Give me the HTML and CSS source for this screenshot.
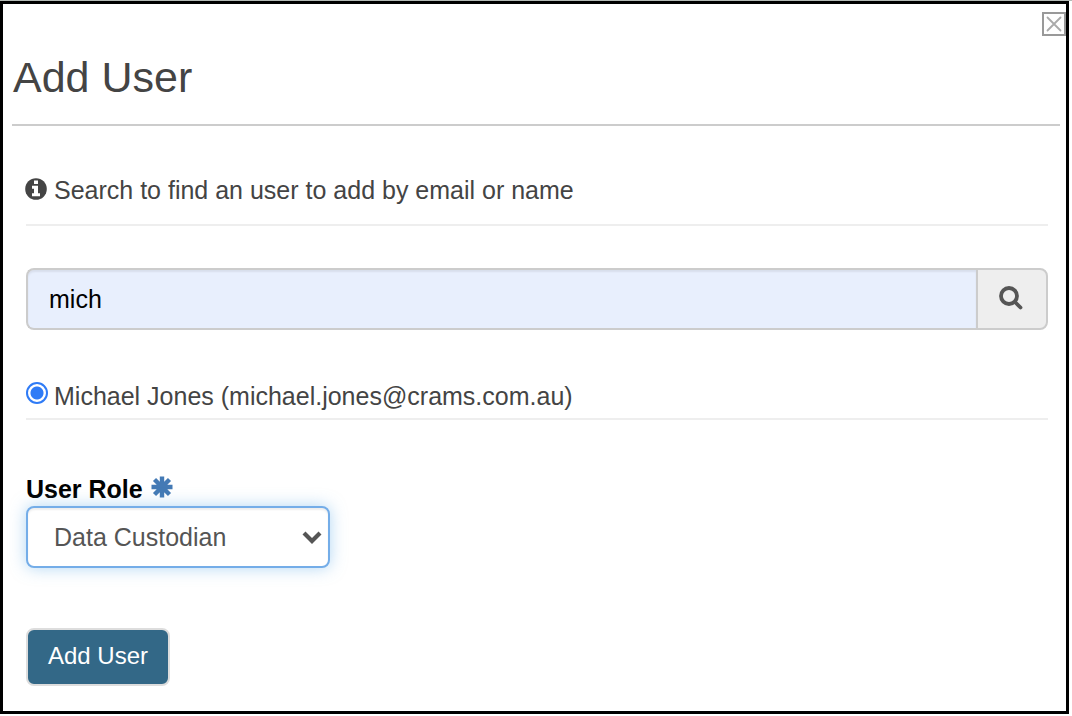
FILE: index.html
```html
<!DOCTYPE html>
<html lang="en">
<head>
<meta charset="utf-8">
<meta name="viewport" content="width=device-width, initial-scale=1">
<title>Add User</title>
<link rel="stylesheet" href="styles.css">
</head>
<body>
<main class="dialog" role="dialog" aria-labelledby="dialog-title">
  <button class="close" type="button" aria-label="Close">
    <svg class="close-icon" viewBox="0 0 20 20" aria-hidden="true"><path d="M3.500 3.500l13 13M16.500 3.500l-13 13" fill="none" stroke="#aaa" stroke-width="1.800" stroke-linecap="round"/></svg>
  </button>
  <header class="dialog-header">
    <h1 class="title" id="dialog-title">Add User</h1>
  </header>
  <form class="form">
    <p class="hint">
      <svg class="icon" viewBox="0 0 22 22" aria-hidden="true"><circle cx="11" cy="11" r="10.800" fill="#444"/><path d="M9 2.500h4v3.500H9zM7 7.700h6v7.600h2v3H7v-3h2v-4.600H7z" fill="#fff"/></svg>
      <span>Search to find an user to add by email or name</span>
    </p>
    <div class="search">
      <input class="search-input" type="text" value="mich" aria-label="Email or name">
      <button class="search-button" type="button" aria-label="Search">
        <svg class="search-icon" viewBox="0 0 24 24" aria-hidden="true"><circle cx="10" cy="10" r="8" fill="none" stroke="#555" stroke-width="3.800"/><path d="M16 16l5.500 5.500" stroke="#555" stroke-width="3.800" stroke-linecap="round"/></svg>
      </button>
    </div>
    <label class="result">
      <input class="radio" type="radio" name="user" checked>
      <span>Michael Jones (michael.jones@crams.com.au)</span>
    </label>
    <div class="role">
      <label class="role-label" for="role">User Role
        <svg class="icon" viewBox="0 0 22 22" aria-hidden="true"><path d="M11 .5v21M.5 11h21M3.500 3.500l15 15M18.500 3.500l-15 15" stroke="#447ab5" stroke-width="4.400"/></svg>
      </label>
      <div class="select-wrap">
        <select class="select" id="role"><option>Data Custodian</option></select>
        <svg class="chevron" viewBox="0 0 20 14" aria-hidden="true"><path d="M2 3l8 8 8-8" fill="none" stroke="#555" stroke-width="4.200"/></svg>
      </div>
    </div>
    <button class="submit" type="button">Add User</button>
  </form>
</main>
</body>
</html>
```
FILE: styles.css
```css
* {
  box-sizing: border-box;
}

body {
  margin: 0;
  padding: 0 3px 2px 0;
  border-top: 1px solid #b4bab6;
  background: #fff;
  color: #444;
  font-family: "Liberation Sans", Arial, sans-serif;
  font-size: 25px;
  line-height: 36px;
}

.dialog {
  position: relative;
  border: 3px solid #000;
  padding: 41px 6px 25px 9px;
}

.close {
  position: absolute;
  top: 8px;
  right: 0;
  width: 24px;
  height: 24px;
  padding: 0;
  border: 2px solid #999;
  background: #fff;
}

.close-icon {
  display: block;
  width: 20px;
  height: 20px;
}

.dialog-header {
  padding: 0 0 15px 1px;
  border-bottom: 2px solid #ccc;
}

.title {
  margin: 0;
  font-size: 43px;
  font-weight: 400;
  line-height: 64px;
}

.form {
  padding: 44px 12px 0 14px;
}

.hint {
  display: flex;
  align-items: center;
  gap: 7px;
  margin: 0 0 42px;
  padding: 2px 0 16px;
  border-bottom: 2px solid #eee;
}

.icon {
  width: 22px;
  height: 22px;
}

.hint .icon {
  margin: 0 0 2px -1px;
}

.search {
  display: flex;
  margin-bottom: 48px;
}

.search-input {
  flex: 1;
  min-width: 0;
  height: 62px;
  padding: 0 21px;
  border: 2px solid #ccc;
  border-right: 0;
  border-radius: 8px 0 0 8px;
  outline: 0;
  background: #e8effd;
  box-shadow: inset 0 2px 2px rgba(0, 0, 0, 0.07);
  color: #000;
  font: inherit;
}

.search-button {
  display: grid;
  place-items: center;
  width: 72px;
  padding: 0 2px 2px 0;
  border: 2px solid #ccc;
  border-radius: 0 8px 8px 0;
  background: #eee;
}

.search-icon {
  width: 24px;
  height: 24px;
}

.result {
  display: flex;
  align-items: center;
  gap: 6px;
  padding-bottom: 4px;
  border-bottom: 2px solid #eee;
}

.radio {
  appearance: none;
  width: 22px;
  height: 22px;
  margin: 0 0 6px;
  border: 2px solid #2f7bf6;
  border-radius: 50%;
  background: radial-gradient(circle, #2f7bf6 6px, #fff 7px);
}

.role {
  margin-top: 50px;
}

.role-label {
  display: flex;
  align-items: center;
  gap: 8px;
  padding-top: 2px;
  color: #000;
  font-weight: 700;
  line-height: 34px;
}

.role-label .icon {
  margin-bottom: 4px;
}

.select-wrap {
  position: relative;
  width: 304px;
  max-width: 100%;
}

.select {
  display: block;
  appearance: none;
  width: 100%;
  height: 62px;
  padding: 0 40px 0 26px;
  border: 2px solid #74ade8;
  border-radius: 8px;
  outline: 0;
  background: #fff;
  box-shadow: inset 0 2px 2px rgba(0, 0, 0, 0.07), 0 0 16px rgba(102, 175, 233, 0.5);
  color: #555;
  font: inherit;
}

.chevron {
  position: absolute;
  top: 24px;
  right: 8px;
  width: 20px;
  height: 14px;
  pointer-events: none;
}

.submit {
  height: 58px;
  margin-top: 60px;
  padding: 0 20px 2px;
  border: 2px solid #ddd;
  border-radius: 8px;
  background: #336887;
  color: #fff;
  font: inherit;
  font-size: 24px;
}
```
